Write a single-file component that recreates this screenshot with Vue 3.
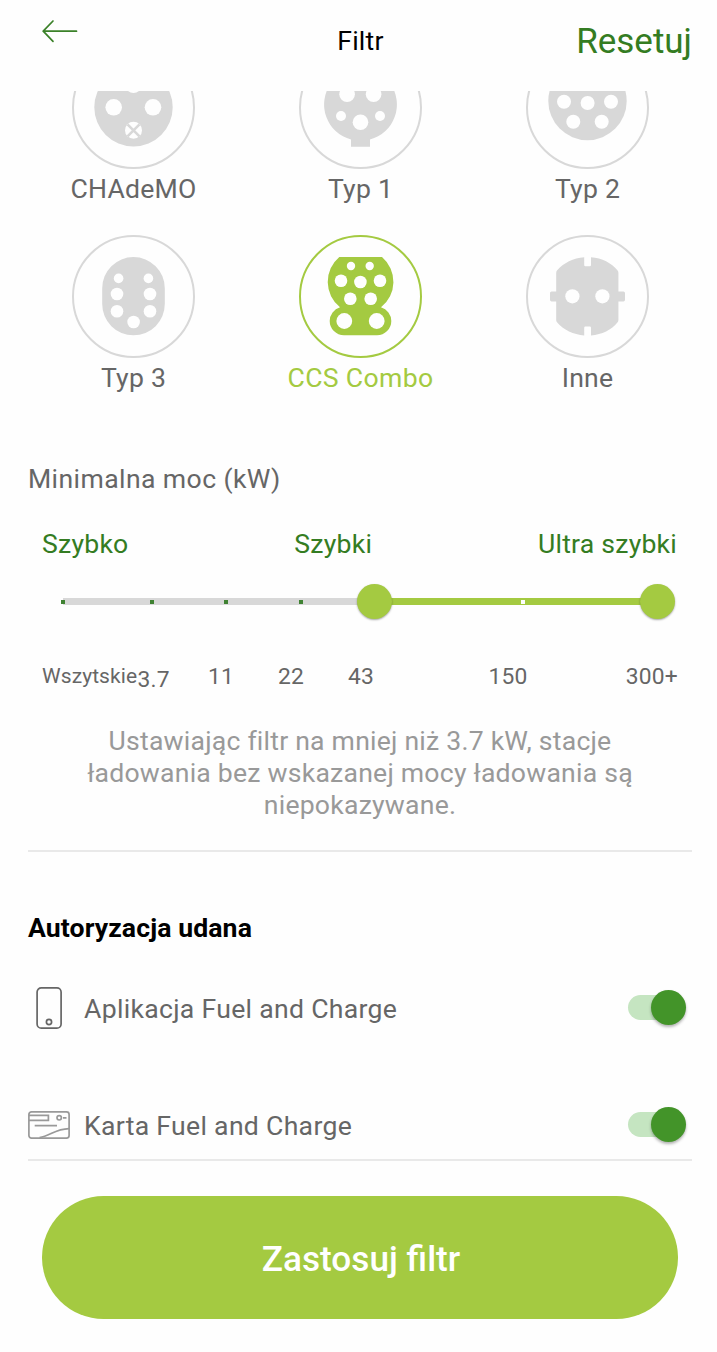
<template>
  <div class="filter-page">
    <header class="top-bar">
      <button class="back-btn" aria-label="Wstecz">
        <svg width="37" height="24" viewBox="0 0 37 24"><path d="M12 2L2.2 12.2L12 22.4M2.2 12.2H35.5" fill="none" stroke="currentColor" stroke-width="1.7" stroke-linecap="round" stroke-linejoin="round" /></svg>
      </button>
      <h1 class="page-title">Filtr</h1>
      <button class="reset-btn">Resetuj</button>
    </header>

    <main class="content">
      <div class="plug-window">
        <div class="plug-grid">
          <div v-for="plug in plugs" :key="plug.name" class="plug" :class="{ active: plug.name === selected }" @click="selected = plug.name">
            <svg class="plug-icon" width="123" height="123" viewBox="0 0 123 123">
              <circle cx="61.5" cy="61.5" r="60.5" fill="none" stroke="currentColor" stroke-width="2" />
              <path :d="plug.body" fill="currentColor" />
              <circle v-for="(hole, i) in plug.holes" :key="i" :cx="hole[0]" :cy="hole[1]" :r="hole[2]" fill="#fefefe" />
              <path v-if="plug.cross" :d="plug.cross" stroke="currentColor" stroke-width="2.6" />
            </svg>
            <span class="plug-name">{{ plug.name }}</span>
          </div>
        </div>
      </div>

      <section class="power">
        <h2 class="power-title">Minimalna moc (kW)</h2>
        <div class="speed-labels">
          <span>Szybko</span>
          <span>Szybki</span>
          <span>Ultra szybki</span>
        </div>
        <div class="slider">
          <div class="track"></div>
          <div class="range" :style="{ left: range[0] + '%', width: range[1] - range[0] + '%' }"></div>
          <i v-for="t in ticks" :key="t" class="tick" :class="{ inside: t > range[0] }" :style="{ left: t + '%' }"></i>
          <i v-for="r in range" :key="'thumb' + r" class="thumb" :style="{ left: r + '%' }"></i>
        </div>
        <div class="scale">
          <span v-for="s in scale" :key="s">{{ s }}</span>
        </div>
        <p class="hint">Ustawiając filtr na mniej niż 3.7 kW, stacje<br />ładowania bez wskazanej mocy ładowania są<br />niepokazywane.</p>
      </section>

      <section class="auth">
        <h2 class="auth-title">Autoryzacja udana</h2>
        <div class="auth-row">
          <span class="auth-icon">
            <svg width="42" height="42" viewBox="0 0 42 42" fill="none" stroke="#666" stroke-width="1.7"><rect x="9.1" y="0.9" width="24" height="40.2" rx="4.2" /><circle cx="21" cy="35" r="2.6" /></svg>
          </span>
          <span class="auth-label">Aplikacja Fuel and Charge</span>
          <span class="switch" :class="{ on: useApp }" @click="useApp = !useApp"></span>
        </div>
        <div class="auth-row">
          <span class="auth-icon">
            <svg width="42" height="28" viewBox="0 0 42 28" fill="none" stroke="#999" stroke-width="1.7"><rect x="0.9" y="0.9" width="40.2" height="26.2" rx="2.6" /><path d="M1 4.4H20.4V9.3H1M6.7 14.7H29M35 6.8H38.5M11.5 26.5C22 25 27 18 41 17.6" /><circle cx="31.2" cy="6.8" r="2.2" /></svg>
          </span>
          <span class="auth-label">Karta Fuel and Charge</span>
          <span class="switch" :class="{ on: useCard }" @click="useCard = !useCard"></span>
        </div>
      </section>
    </main>

    <footer class="bottom">
      <button class="apply-btn">Zastosuj filtr</button>
    </footer>
  </div>
</template>

<script setup>
import { ref } from 'vue';

const selected = ref('CCS Combo');
const useApp = ref(true);
const useCard = ref(true);

const range = ref([52.5, 100]);
const ticks = [0, 15, 27.5, 40, 77.5];
const scale = ['Wszytskie', '3.7', '11', '22', '43', '150', '300+'];

// holes: [cx, cy, r]
const plugs = [
  {
    name: 'CHAdeMO',
    body: 'M22.3 61.3a39.2 39.2 0 1 0 78.4 0a39.2 39.2 0 1 0 -78.4 0z',
    holes: [[61.5, 38.7, 8.3], [41.7, 61.3, 8.3], [81, 61.3, 8.3], [61.5, 84.3, 8.5]],
    cross: 'M55.5 78.3L67.5 90.3M67.5 78.3L55.5 90.3'
  },
  {
    name: 'Typ 1',
    body: 'M52 93.6A36.4 36.4 0 1 1 71 93.6V100.7H52z',
    holes: [[48.1, 48.3, 7.8], [74.6, 48.3, 7.8], [42, 70, 5], [81, 70, 5], [61.5, 76.3, 7.8]]
  },
  {
    name: 'Typ 2',
    body: 'M34 27A39.2 39.2 0 1 0 89 27z',
    holes: [[38, 55.7, 7], [61.6, 57, 7], [85, 55.7, 7], [47.3, 75.7, 7], [75.7, 75.7, 7]]
  },
  {
    name: 'Typ 3',
    body: 'M30.2 53.3a31.3 31.3 0 0 1 62.6 0V69a31.3 31.3 0 0 1 -62.6 0z',
    holes: [[46.6, 43.4, 4.8], [76.4, 43.4, 4.8], [45, 59, 6.3], [78, 59, 6.3], [45, 76.3, 6.3], [78, 76.3, 6.3], [61.6, 87, 6.3]]
  },
  {
    name: 'CCS Combo',
    body: 'M40.3 22H83A32.5 32.5 0 0 1 82 72.3A14.3 14.3 0 0 1 92.3 86A14.3 14.3 0 0 1 78 100.3H45A14.3 14.3 0 0 1 30.7 86A14.3 14.3 0 0 1 41 72.3A32.5 32.5 0 0 1 40.3 22z',
    holes: [[52, 31, 4.2], [70.7, 31, 4.2], [42, 45.7, 6.3], [61.4, 47, 6.3], [81, 45.7, 6.3], [51.3, 63.7, 6.3], [71.7, 63.7, 6.3], [45.3, 86, 7.9], [77.7, 86, 7.9]]
  },
  {
    name: 'Inne',
    body: 'M58.2 22.3V30Q58.2 31.2 59.4 31.2H63.8Q65 31.2 65 30V22.3C76 23 85.5 28 91.6 35.6Q92.4 36.5 92.4 38V56.4H97.4Q99 56.4 99 58V64.8Q99 66.4 97.4 66.4H92.4V85Q92.4 86.3 91.6 87.2C85.5 94.8 76 99.6 65 100.4V92.8Q65 91.6 63.8 91.6H59.4Q58.2 91.6 58.2 92.8V100.4C47.5 99.6 37.5 94.8 31 87.2Q30.2 86.3 30.2 85V66.4H25.6Q24 66.4 24 64.8V58Q24 56.4 25.6 56.4H30.2V38Q30.2 36.5 31 35.6C37.5 28 47.5 23 58.2 22.3z',
    holes: [[46.4, 61.3, 7.1], [76.4, 61.3, 7.1]]
  }
];
</script>

<style>
body {
  background: #fefefe;
}
</style>

<style scoped>
.filter-page {
  width: 717px;
  height: 1352px;
  overflow: hidden;
  background: #fefefe;
  font-family: Roboto, 'Noto Sans', sans-serif;
  font-size: 26.6px;
  letter-spacing: 0.22px;
  line-height: 32px;
  color: #666;
}
h1, h2, p {
  margin: 0;
  font-weight: 400;
  font-size: inherit;
}
button {
  border: none;
  background: none;
  padding: 0;
  font-family: inherit;
  cursor: pointer;
}
.top-bar {
  height: 91px;
  padding: 0 25px 0 41px;
  box-sizing: border-box;
  display: grid;
  grid-template-columns: 201px 1fr 213px;
  align-items: start;
}
.back-btn {
  height: 24px;
  margin-top: 19px;
  color: #3b8129;
  justify-self: start;
}
.back-btn svg {
  display: block;
}
.page-title {
  margin-top: 25px;
  text-align: center;
  color: #000;
}
.reset-btn {
  margin-top: 22px;
  justify-self: end;
  font-size: 35px;
  line-height: 40px;
  color: #347c22;
}
.plug-window {
  height: 306px;
  overflow: hidden;
}
.plug-grid {
  display: grid;
  grid-template-columns: repeat(3, 227px);
  row-gap: 26px;
  margin: -45px 0 0 20px;
}
.plug {
  display: flex;
  flex-direction: column;
  align-items: center;
  cursor: pointer;
}
.plug-icon {
  display: block;
  color: #d8d8d8;
}
.plug-name {
  line-height: 40px;
}
.plug.active,
.plug.active .plug-icon {
  color: #a4ca41;
}
.plug.active .plug-name {
  letter-spacing: 0.35px;
}
.power {
  margin: 0 25px 0 28px;
  padding: 66px 0 29px;
  border-bottom: 2px solid #e9e9e9;
}
.power-title {
  letter-spacing: 0.4px;
}
.speed-labels {
  display: flex;
  justify-content: space-between;
  margin: 33px 15px 0 14px;
  color: #347c22;
}
.slider {
  position: relative;
  height: 35px;
  margin: 24px 35px 0;
}
.track,
.range {
  position: absolute;
  top: 14px;
  height: 7px;
}
.track {
  left: 0;
  width: 100%;
  background: #d8d8d8;
}
.range {
  background: #a4ca41;
}
.tick {
  position: absolute;
  top: 16px;
  width: 4px;
  height: 4px;
  margin-left: -2px;
  background: #3f8232;
}
.tick.inside {
  background: #fefefe;
}
.thumb {
  position: absolute;
  top: 0;
  width: 35px;
  height: 35px;
  margin-left: -17.5px;
  border-radius: 50%;
  background: #a4ca41;
  box-shadow: 0 1px 2px rgba(0, 0, 0, 0.35);
}
.scale {
  display: grid;
  grid-template-columns: 95.5px 48.5px 70px 70px 70px 224px 58px;
  margin: 42px 14px 0;
  font-size: 22.8px;
  text-align: center;
}
.scale span:first-child {
  margin-top: -1px;
  font-size: 21px;
  letter-spacing: 0.08px;
  text-align: left;
}
.scale span:nth-child(2) {
  padding-top: 3px;
  text-align: left;
}
.scale span:last-child {
  text-align: right;
}
.hint {
  margin-top: 29px;
  text-align: center;
  color: #999;
}
.auth {
  margin: 0 25px 0 28px;
  padding-top: 60px;
  border-bottom: 2px solid #e9e9e9;
}
.auth-title {
  font-weight: 700;
  letter-spacing: 0.1px;
  color: #000;
}
.auth-row {
  display: flex;
  align-items: center;
  height: 42px;
  margin-top: 43px;
}
.auth-row + .auth-row {
  margin-top: 75px;
  padding-bottom: 13px;
}
.auth-icon {
  width: 42px;
  margin-right: 14px;
}
.auth-icon svg {
  display: block;
}
.auth-label {
  flex: 1;
  padding-top: 2px;
  letter-spacing: 0.3px;
}
.switch {
  position: relative;
  width: 56px;
  height: 25px;
  margin: 0 8px 2px 0;
  border-radius: 13px;
  background: #ddd;
}
.switch::after {
  content: '';
  position: absolute;
  left: -2px;
  top: -5px;
  width: 35px;
  height: 35px;
  border-radius: 50%;
  background: #f5f5f5;
  box-shadow: 0 2px 3px rgba(0, 0, 0, 0.3);
}
.switch.on {
  background: #c5e5c1;
}
.switch.on::after {
  left: 23px;
  background: #439429;
}
.bottom {
  padding: 35px 39px 0 42px;
}
.apply-btn {
  display: block;
  width: 100%;
  height: 123px;
  padding: 3px 0 0 2px;
  border-radius: 62px;
  background: #a4ca41;
  color: #fff;
  font-size: 35.2px;
  font-weight: 500;
}
</style>
